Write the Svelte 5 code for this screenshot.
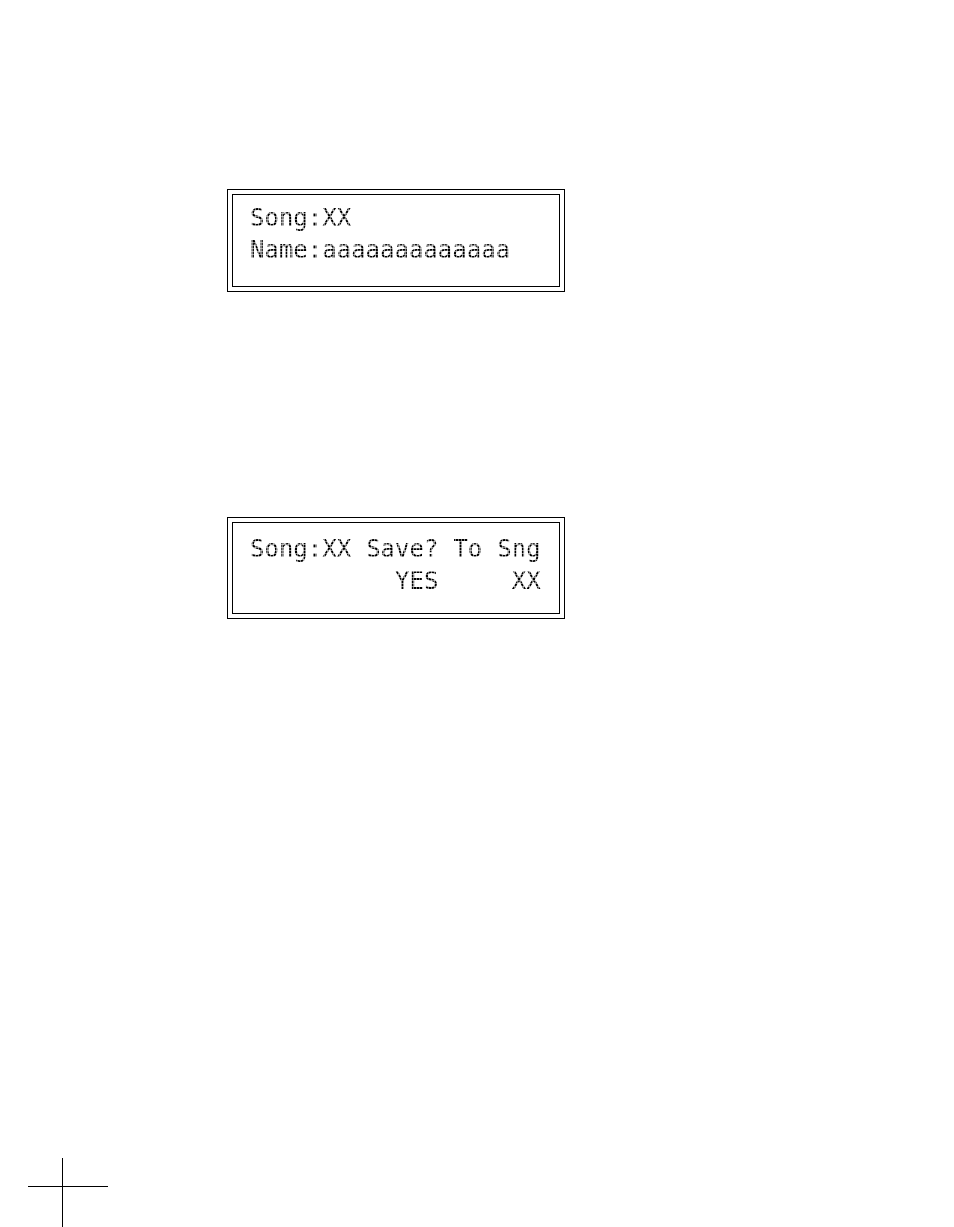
<script>
	const nameScreen = [
		{ label: 'Song:', value: 'XX' },
		{ label: 'Name:', value: 'aaaaaaaaaaaaa' }
	];

	const saveScreen = [
		{ label: 'Song:XX', value: '' },
		{ label: 'Save?', value: 'YES' },
		{ label: 'To', value: '' },
		{ label: 'Sng', value: 'XX' }
	];
</script>

<main class="page">
	<section class="lcd">
		<div class="screen">
			{#each nameScreen as row}
				<div class="dots">{row.label}{row.value}</div>
			{/each}
		</div>
	</section>

	<section class="lcd">
		<div class="screen save">
			{#each saveScreen as field}
				<div class="field dots">
					<span>{field.label}</span>
					<span>{field.value}</span>
				</div>
			{/each}
		</div>
	</section>

	<svg class="crop-mark" width="80" height="69" viewBox="0 0 80 69" aria-hidden="true">
		<path d="M34.5 0V69M0 28.5H80" stroke="#000" stroke-width="1" />
	</svg>
</main>

<style>
	:global(body) {
		margin: 0;
		background: #fff;
	}

	.page {
		display: flex;
		flex-direction: column;
		gap: 225px;
		min-height: 100vh;
		box-sizing: border-box;
		padding: 189px 28px 0;
	}

	.lcd {
		box-sizing: border-box;
		width: 100%;
		max-width: 338px;
		margin-left: 199px;
		padding: 4px;
		border: 1px solid #000;
	}

	.screen {
		padding: 7px 16px 20px 17px;
		border: 1px solid #000;
		font-family: 'DejaVu Sans Mono', monospace;
		font-size: 24px;
		line-height: 32px;
		color: #000;
	}

	.save {
		display: flex;
		gap: 15px;
		padding: 10px 16px 16px 17px;
	}

	/* thin pale lines break the letters into LCD dots */
	.dots {
		mask-image:
			repeating-linear-gradient(to right, #000 0 2px, rgba(0, 0, 0, 0.5) 2px 3px),
			repeating-linear-gradient(to bottom, #000 0 2px, rgba(0, 0, 0, 0.5) 2px 3px);
		mask-composite: intersect;
	}

	.field {
		display: flex;
		flex-direction: column;
		text-align: right;
	}

	.field span {
		min-height: 32px;
	}

	.crop-mark {
		display: block;
		margin-top: auto;
	}
</style>
